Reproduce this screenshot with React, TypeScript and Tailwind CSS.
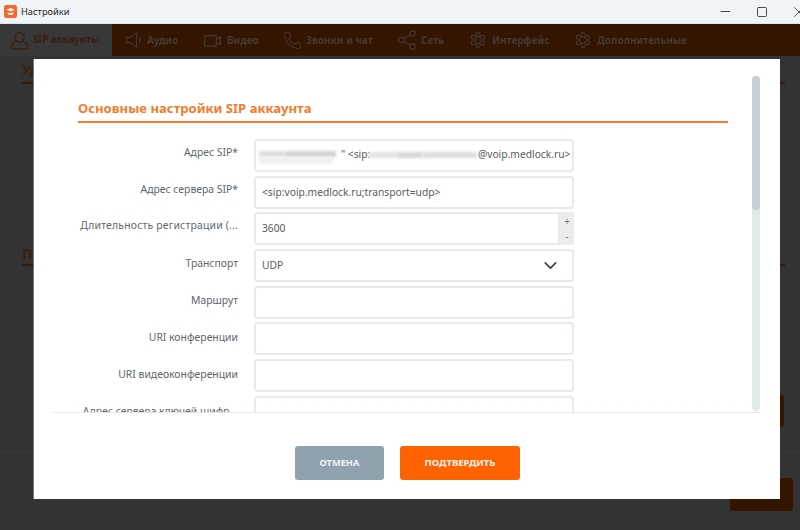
import type { ReactNode } from "react";
import { Phone, Share2, ChevronDown, Minus, Square, X } from "lucide-react";

function UserIcon() {
  return (
    <svg width="19" height="19" viewBox="0 0 24 24" fill="none" stroke="currentColor" strokeWidth="1.5">
      <circle cx="12" cy="8" r="6" />
      <path d="M8 13C4 14.5 1.5 17 1.5 20a2.5 2.5 0 0 0 2.5 2.5h16a2.5 2.5 0 0 0 2.5-2.5c0-3-2.500-5.500-6.500-7" />
    </svg>
  );
}

function SpeakerIcon() {
  return (
    <svg width="16" height="16" viewBox="0 0 24 24" fill="none" stroke="currentColor" strokeWidth="1.7">
      <path d="M1 8h6l9-7v22l-9-7H1z" strokeLinejoin="round" />
      <path d="M20 8.500c1.500 2 1.500 5 0 7" strokeLinecap="round" />
    </svg>
  );
}

function VideoIcon() {
  return (
    <svg width="17" height="17" viewBox="0 0 24 24" fill="none" stroke="currentColor" strokeWidth="1.7">
      <rect x="1" y="5" width="16.500" height="15" rx="1" />
      <path d="M17.500 11 23 7v11l-5.500-4" strokeLinejoin="round" />
    </svg>
  );
}

function GearIcon() {
  return (
    <svg width="18" height="18" viewBox="0 0 24 24" fill="none" stroke="currentColor" strokeWidth="1.500">
      <path d="M9.671 2.136a2.34 2.34 0 0 1 4.659 0 2.34 2.34 0 0 0 3.319 1.915 2.34 2.34 0 0 1 2.33 4.033 2.34 2.34 0 0 0 0 3.831 2.34 2.34 0 0 1-2.33 4.033 2.34 2.34 0 0 0-3.319 1.915 2.34 2.34 0 0 1-4.659 0 2.34 2.34 0 0 0-3.32-1.915 2.34 2.34 0 0 1-2.33-4.033 2.34 2.34 0 0 0 0-3.831A2.34 2.34 0 0 1 6.350 4.051a2.34 2.34 0 0 0 3.32-1.915" transform="translate(0 2)" />
      <circle cx="12" cy="12" r="4.500" />
    </svg>
  );
}

const tabs = [
  { icon: <span className="ml-[1px]"><SpeakerIcon /></span>, label: "Аудио", cls: "w-[79px] gap-[5px] pl-[12px]" },
  { icon: <VideoIcon />, label: "Видео", cls: "w-[79px] gap-[6px] pl-[12px]" },
  { icon: <Phone size={19} strokeWidth={1.3} />, label: "Звонки и чат", cls: "w-[115px] gap-[4px] pl-[12px]" },
  { icon: <Share2 size={22} strokeWidth={1.2} />, label: "Сеть", cls: "w-[72px] gap-[3px] pl-[10px]" },
  { icon: <GearIcon />, label: "Интерфейс", cls: "w-[105px] gap-[5px] pl-[11px]" },
  { icon: <GearIcon />, label: "Дополнительные", cls: "w-[130px] gap-[5px] pl-[11px]" },
];

function Row({ label, labelCls = "pt-[5px]", children }: { label: string; labelCls?: string; children?: ReactNode }) {
  return (
    <div className="flex h-[33px] items-start">
      <div className={`w-[176px] shrink-0 pr-[16px] text-right text-[10.4px] leading-[16px] whitespace-nowrap text-[#5f6569] ${labelCls}`}>
        {label}
      </div>
      <div className="relative flex h-[33px] w-[320px] shrink-0 items-center rounded-[4px] border-2 border-[#e8eaea] bg-white pl-[6px] text-[10.25px] text-[#5a5a5a]">
        {children}
      </div>
    </div>
  );
}

export default function App() {
  return (
    <div className="flex h-[530px] w-[800px] flex-col overflow-hidden bg-[#333333] font-['Noto_Sans','Open_Sans',sans-serif]">
      <div className="flex h-[24px] shrink-0 items-center border-b border-[#dfe4e8] bg-[#eff4f9] pl-[4px]">
        <svg width="13" height="13" viewBox="0 0 13 13">
          <rect width="13" height="13" rx="2" fill="#f4692a" />
          <path d="M2.5 4.8 6.5 3l4 1.8-4 1.8z" fill="#fff" />
          <path d="M3.8 7c.6 1.6 4.8 1.6 5.4 0v2c-1 1.2-4.4 1.2-5.4 0z" fill="#fff" />
        </svg>
        <span className="ml-[4px] text-[9.25px] text-[#222222]">Настройки</span>
        <div className="ml-auto flex items-center">
          <Minus size={15} strokeWidth={1.3} className="mr-[23px] text-[#222222]" />
          <Square size={12} strokeWidth={1.6} className="mr-[22px] text-[#222222]" />
          <X size={18} strokeWidth={1} className="-mr-[8px] text-[#222222]" />
        </div>
      </div>
      <div className="flex h-[32px] shrink-0 items-stretch bg-[#331500] text-[10px] font-bold text-[#443a33]">
        <div className="mr-px flex w-[112px] items-center gap-[4px] bg-[#383838] pl-[10px] text-[9.75px] text-[#3d1d07]">
          <UserIcon />
          <span>SIP аккаунты</span>
        </div>
        {tabs.map((t) => (
          <div key={t.label} className={`flex ${t.cls} items-center whitespace-nowrap`}>
            {t.icon}
            <span>{t.label}</span>
          </div>
        ))}
      </div>
      <div className="relative flex-1 bg-[#333333]">
        <div className="pl-[22px] pt-[3px] text-[14px] font-bold text-[#3f1f08]">
          <div className="w-[763px] border-b-[2px] border-[#3a1a04] pb-[2px]">Уд</div>
          <div className="mt-[160px] w-[763px] border-b-[2px] border-[#3a1a04] leading-[20px]">Пр</div>
        </div>
        <div className="absolute top-[339px] right-[16px] h-[32px] w-[40px] rounded-[3px] bg-[#331500]" />
        <div className="absolute top-[396px] left-0 h-px w-full bg-[#3a3a3a]" />
        <div className="absolute top-[422px] right-[7px] h-[33px] w-[63px] rounded-[3px] bg-[#331500]" />

        <div className="absolute top-[3px] left-[34px] flex h-[440px] w-[746px] flex-col bg-white shadow-[-1px_0_0_#777777]">
          <div className="relative ml-[19px] h-[354px] w-[708px] shrink-0 overflow-hidden border-b border-[#e6e8e8]">
            <div className="pl-[25px] pt-[39px]">
              <div className="h-[25px] w-[650px] border-b-2 border-[#ff7a2e] text-[13.1px] leading-[20px] font-bold text-[#f47b2a]">
                Основные настройки SIP аккаунта
              </div>
              <div className="mt-[16px] flex flex-col gap-[3.7px]">
                <Row label="Адрес SIP*">
                  <span className="absolute left-[3px] top-[10px] h-[6px] w-[26px] bg-[#dcdcdc] blur-[1.5px]" />
                  <span className="absolute left-[29px] top-[10px] h-[6px] w-[51px] bg-[#d2d2d2] blur-[1.5px]" />
                  <span className="absolute left-[3px] top-[16px] h-[7px] w-[74px] bg-[#efefef] blur-[1.5px]" />
                  <span className="absolute left-[85px] top-[5px] leading-[16px] whitespace-nowrap">" &lt;sip:</span>
                  <span className="absolute left-[113px] top-[11px] h-[6px] w-[28px] bg-[#e2e2e2] blur-[1.5px]" />
                  <span className="absolute left-[141px] top-[11px] h-[6px] w-[26px] bg-[#d6d6d6] blur-[1.5px]" />
                  <span className="absolute left-[167px] top-[11px] h-[6px] w-[54px] bg-[#dcdcdc] blur-[1.5px]" />
                  <span className="absolute left-[222px] top-[5px] leading-[16px] whitespace-nowrap">@voip.medlock.ru&gt;</span>
                </Row>
                <Row label="Адрес сервера SIP*"><span>&lt;sip:voip.medlock.ru;transport=udp&gt;</span></Row>
                <Row label="Длительность регистрации (..." labelCls="pt-[5px] tracking-[0.2px]">
                  <span>3600</span>
                  <div className="absolute top-[-2px] right-[-2px] flex h-[33px] w-[16px] flex-col items-center justify-between border-l-2 border-[#e8eaea] bg-[#ececec] py-[2px] text-[10px] leading-[14px] text-[#777777]">
                    <span>+</span><span>-</span>
                  </div>
                </Row>
                <Row label="Транспорт" labelCls="pt-[6px]">
                  <span>UDP</span>
                  <ChevronDown size={21} strokeWidth={2} className="absolute right-[11px] text-[#444444]" />
                </Row>
                <Row label="Маршрут" labelCls="pt-[6px]" />
                <Row label="URI конференции" labelCls="pt-[7px]" />
                <Row label="URI видеоконференции" labelCls="pt-[7px]" />
                <Row label="Адрес сервера ключей шифр..." labelCls="pt-[7px]" />
              </div>
            </div>
            <div className="absolute top-[17px] left-[699px] h-[335px] w-[8px] rounded-[4px] bg-[#e3e8e8]">
              <div className="h-[134px] w-[8px] rounded-[4px] bg-[#c9cfd8]" />
            </div>
          </div>
          <div className="flex gap-[16px] pl-[261px] pt-[33px]">
            <button className="h-[34px] w-[89px] rounded-[3px] bg-[#90a2ad] text-[9.25px] font-bold text-[#eef2f4]">ОТМЕНА</button>
            <button className="h-[34px] w-[120px] rounded-[3px] bg-[#ff6200] text-[9.5px] font-bold text-[#fff4ea]">ПОДТВЕРДИТЬ</button>
          </div>
        </div>
      </div>
    </div>
  );
}
